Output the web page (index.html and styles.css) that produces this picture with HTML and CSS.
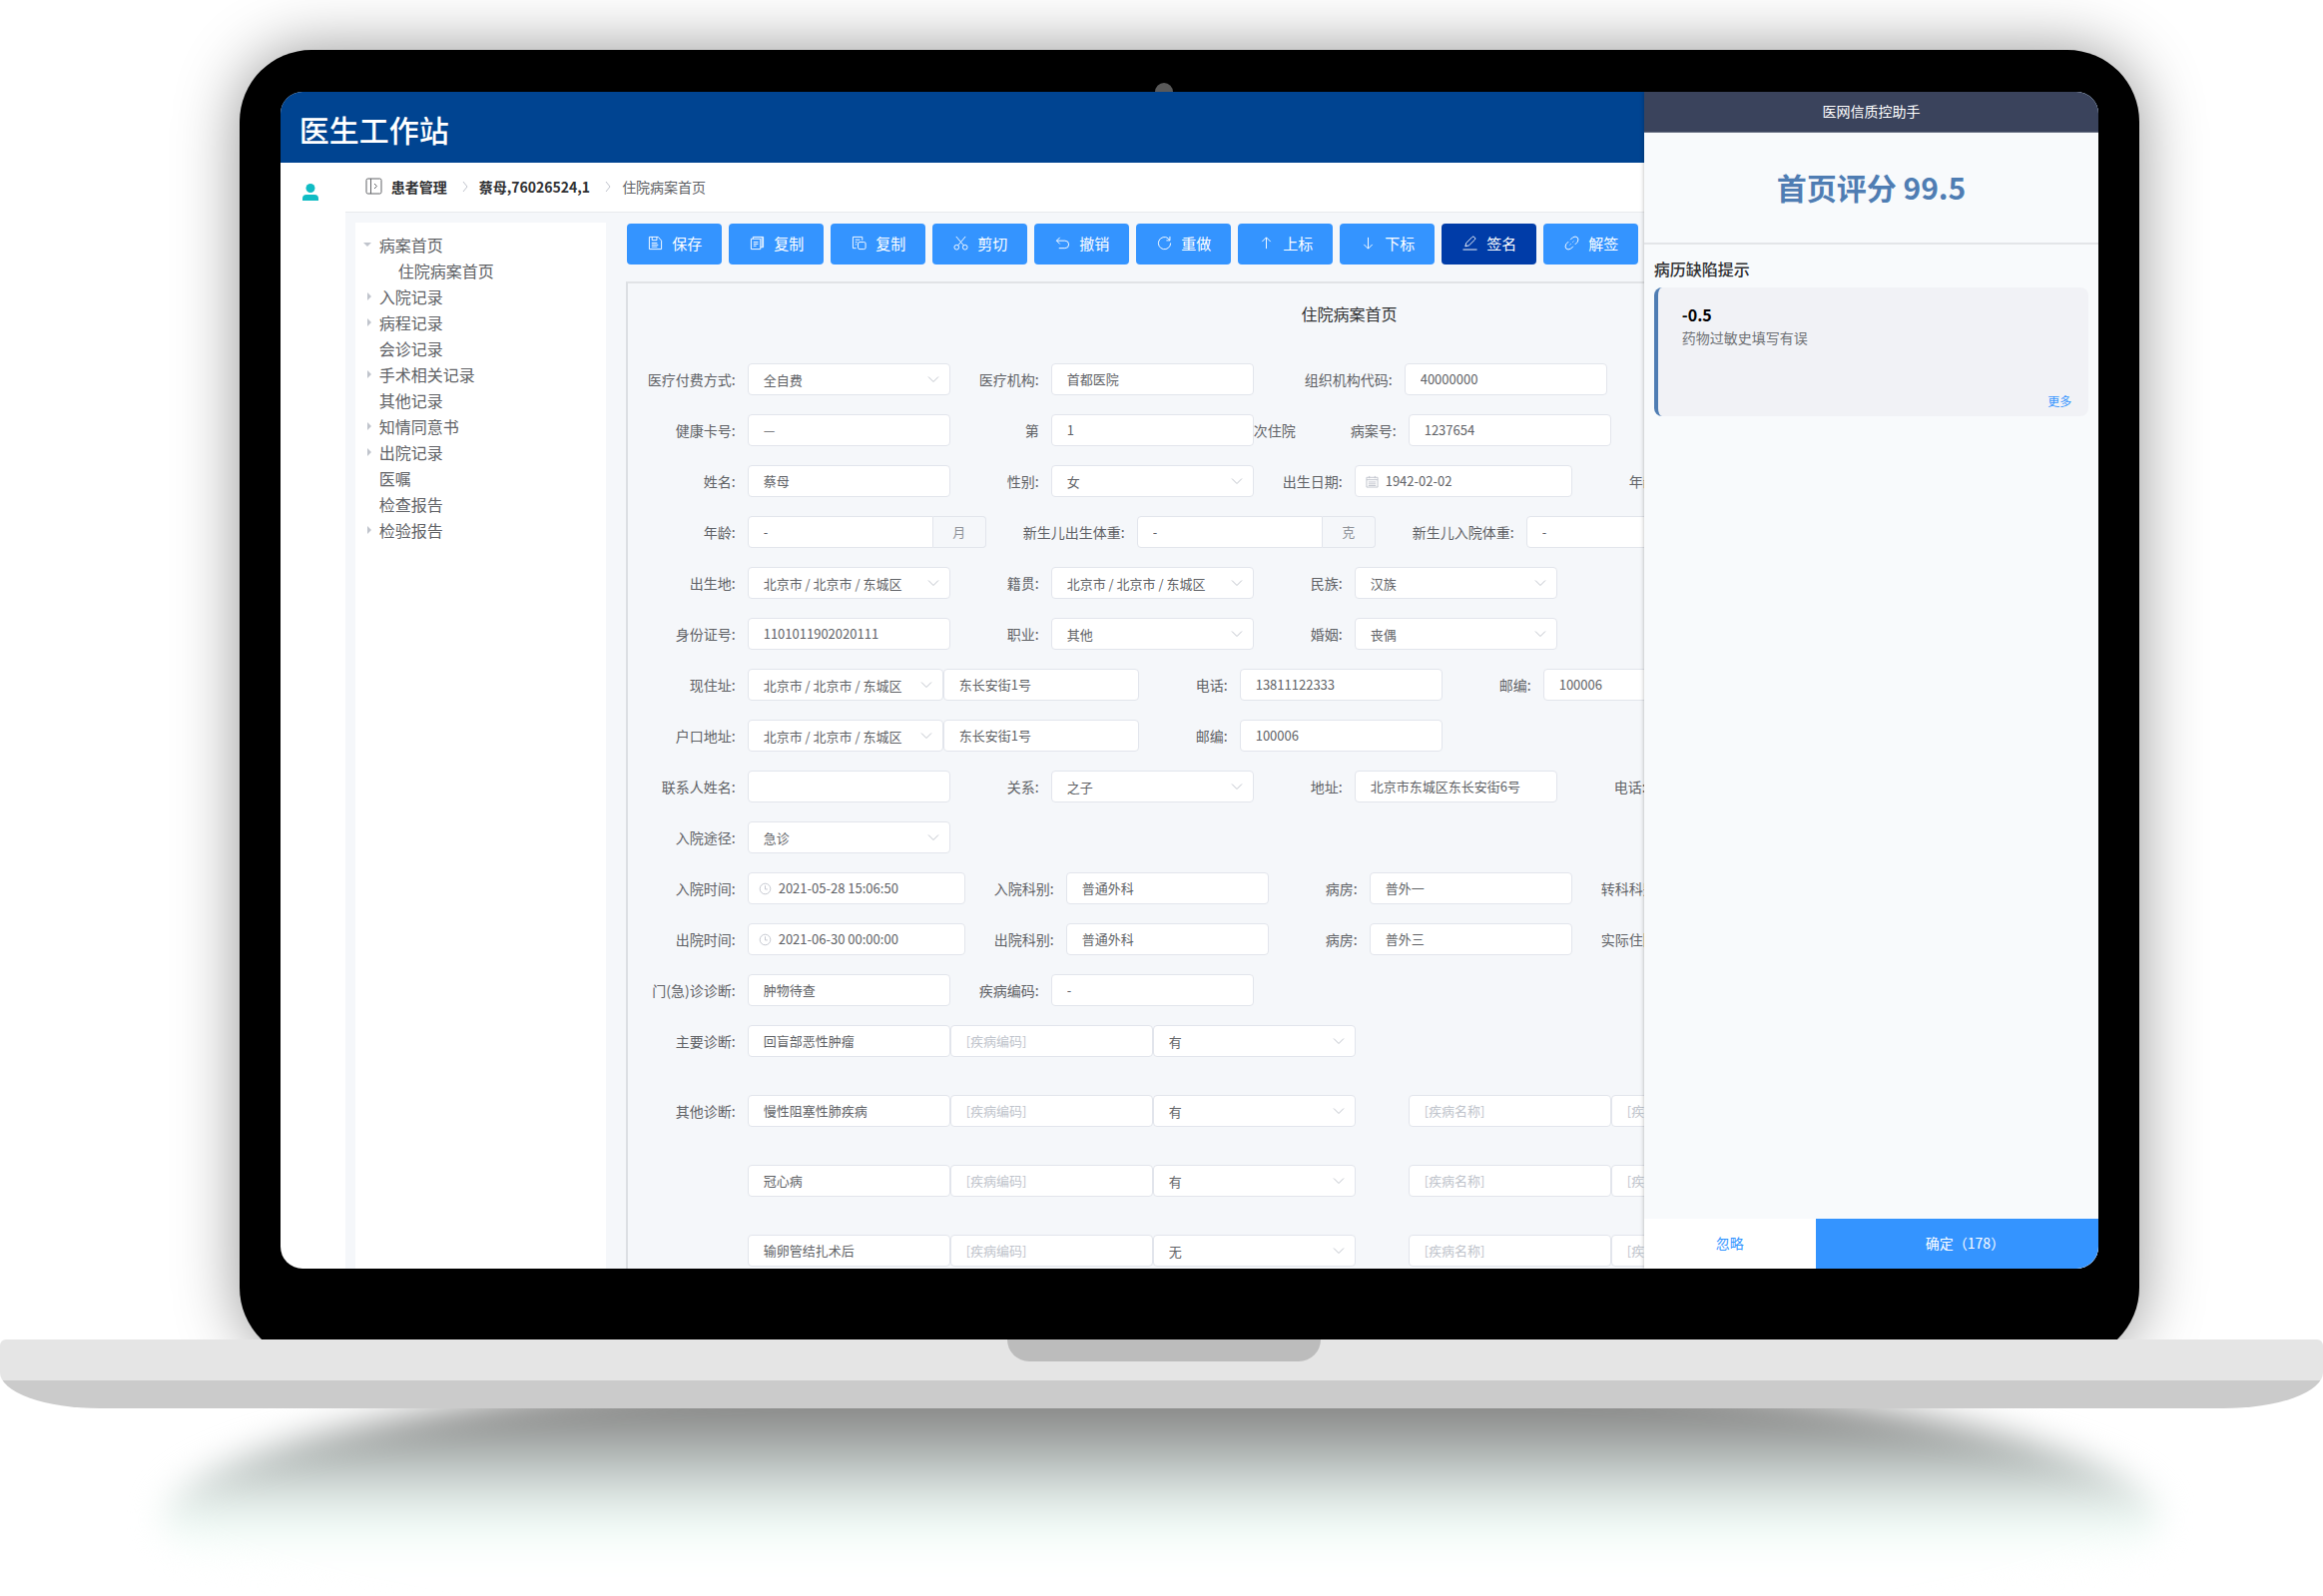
FILE: index.html
```html
<!DOCTYPE html>
<html lang="zh-CN">
<head>
<meta charset="utf-8">
<title>医生工作站</title>
<link rel="stylesheet" href="styles.css">
</head>
<body>
<svg class="sprite" aria-hidden="true">
  <symbol id="i-down" viewBox="0 0 12 12"><path d="M1 3.5 6 8.5 11 3.5"/></symbol>
  <symbol id="i-right" viewBox="0 0 6 12"><path d="M1 1 5 6 1 11"/></symbol>
  <symbol id="i-save" viewBox="0 0 16 16"><path d="M1.5 1.5h9.5l3.500 4v9h-13zM4.500 1.500v3.500h5v-3.500M4 8h6M4 10h7M4 12h6"/></symbol>
  <symbol id="i-copy" viewBox="0 0 16 16"><path d="M1.500 3.500h10v11h-10zM3.500 3.500v-2h11v11h-3M13 1.500v11M4 7h5M4 9h5M4 11h3"/></symbol>
  <symbol id="i-paste" viewBox="0 0 16 16"><path d="M5 13.500H1.500v-12h10V5M4 4.500h5M4 7h2M4 9.500h1.500"/><rect x="7" y="7" width="8" height="7.500" rx="1.500"/></symbol>
  <symbol id="i-cut" viewBox="0 0 16 16"><path d="M3 1l8 9.500M13 1 5 10.500"/><circle cx="3.500" cy="12.500" r="2.500"/><circle cx="12.500" cy="12.500" r="2.500"/></symbol>
  <symbol id="i-undo" viewBox="0 0 16 16"><path d="M5 2 1.500 5.500 5 9M1.500 5.500H10.500a4 4 0 0 1 0 8H4"/></symbol>
  <symbol id="i-redo" viewBox="0 0 16 16"><path d="M14.500 8A6.500 6.500 0 1 1 12 3L13.500 5M13.800 1v4.200H10"/></symbol>
  <symbol id="i-up" viewBox="0 0 16 16"><path d="M8 14V2M3.500 6.500 8 2l4.500 4.500"/></symbol>
  <symbol id="i-dn" viewBox="0 0 16 16"><path d="M8 2v12M3.500 9.500 8 14l4.500-4.500"/></symbol>
  <symbol id="i-edit" viewBox="0 0 16 16"><path d="M3 11.500 4 8 10.500 1.500q1-.8 2 0l.8.8q.8 1 0 2L7 10.500zM.500 15h15"/></symbol>
  <symbol id="i-link" viewBox="0 0 16 16"><path d="M6.500 4.500 9 2q3-1.800 5 0 1.800 2 0 5l-2.500 2.500M9.500 11.500 7 14q-3 1.800-5 0-1.800-2 0-5L4.500 6.500M6 10l1-1M9 7l1-1"/></symbol>
  <symbol id="i-cal" viewBox="0 0 14 14"><path d="M1 2.500h12v10.500H1zM1 5h12M4 1v2.500M10 1v2.500M3 7.500h8M3 9.500h8M3 11.300h8"/></symbol>
  <symbol id="i-clock" viewBox="0 0 14 14"><circle cx="7" cy="7" r="5.700"/><path d="M7 3.500V7.500h2.500"/></symbol>
</svg>

<div class="lid">
  <div class="bezel">
    <span class="camera"></span>
    <div class="screen">
      <header class="topbar"><h1>医生工作站</h1></header>
      <div class="body">
        <nav class="rail">
          <svg class="user" viewBox="0 0 16 17"><circle cx="8" cy="4.500" r="4.500"/><path d="M0 17v-2q0-4 4-4h8q4 0 4 4v2z"/></svg>
        </nav>
        <div class="main">
          <nav class="crumbs">
            <svg class="fold" viewBox="0 0 17 17"><rect x="1" y="1" width="15" height="15" rx="1.500"/><path d="M5.500 1v15M9 6l2.500 2.500L9 11"/></svg>
            <a href="#">患者管理</a>
            <svg class="sep"><use href="#i-right"/></svg>
            <a href="#">蔡母,76026524,1</a>
            <svg class="sep"><use href="#i-right"/></svg>
            <span>住院病案首页</span>
          </nav>
          <div class="work">
            <ul class="tree">
              <li class="open">病案首页</li>
              <li class="child">住院病案首页</li>
              <li class="shut">入院记录</li>
              <li class="shut">病程记录</li>
              <li>会诊记录</li>
              <li class="shut">手术相关记录</li>
              <li>其他记录</li>
              <li class="shut">知情同意书</li>
              <li class="shut">出院记录</li>
              <li>医嘱</li>
              <li>检查报告</li>
              <li class="shut">检验报告</li>
            </ul>
            <div class="content">
              <div class="tools">
                <button><svg><use href="#i-save"/></svg>保存</button>
                <button><svg><use href="#i-copy"/></svg>复制</button>
                <button><svg><use href="#i-paste"/></svg>复制</button>
                <button><svg><use href="#i-cut"/></svg>剪切</button>
                <button><svg><use href="#i-undo"/></svg>撤销</button>
                <button><svg><use href="#i-redo"/></svg>重做</button>
                <button><svg><use href="#i-up"/></svg>上标</button>
                <button><svg><use href="#i-dn"/></svg>下标</button>
                <button class="dark"><svg><use href="#i-edit"/></svg>签名</button>
                <button><svg><use href="#i-link"/></svg>解签</button>
              </div>
              <form class="sheet">
                <h2>住院病案首页</h2>
                <div class="row">
                  <label for="pay">医疗付费方式:</label><span class="sel"><select id="pay"><option>全自费</option></select><svg><use href="#i-down"/></svg></span>
                  <label for="org">医疗机构:</label><input id="org" value="首都医院">
                  <label for="code" class="wide">组织机构代码:</label><input id="code" value="40000000">
                </div>
                <div class="row">
                  <label for="card">健康卡号:</label><input id="card" value="—">
                  <label for="times">第</label><input id="times" value="1"><span class="unit">次住院</span>
                  <label for="mrn" class="mid">病案号:</label><input id="mrn" value="1237654">
                </div>
                <div class="row">
                  <label for="name">姓名:</label><input id="name" value="蔡母">
                  <label for="sex">性别:</label><span class="sel"><select id="sex"><option>女</option></select><svg><use href="#i-down"/></svg></span>
                  <label for="birth">出生日期:</label><span class="date"><svg><use href="#i-cal"/></svg><input id="birth" value="1942-02-02"></span>
                  <label>年龄:</label>
                </div>
                <div class="row">
                  <label for="age">年龄:</label><span class="group"><input id="age" value="-"><span>月</span></span>
                  <label for="bw" class="wide">新生儿出生体重:</label><span class="group"><input id="bw" value="-"><span>克</span></span>
                  <label for="aw" class="wide">新生儿入院体重:</label><span class="group"><input id="aw" value="-"><span>克</span></span>
                </div>
                <div class="row">
                  <label for="bp">出生地:</label><span class="sel"><select id="bp"><option>北京市 / 北京市 / 东城区</option></select><svg><use href="#i-down"/></svg></span>
                  <label for="np">籍贯:</label><span class="sel"><select id="np"><option>北京市 / 北京市 / 东城区</option></select><svg><use href="#i-down"/></svg></span>
                  <label for="eth">民族:</label><span class="sel"><select id="eth"><option>汉族</option></select><svg><use href="#i-down"/></svg></span>
                </div>
                <div class="row">
                  <label for="idn">身份证号:</label><input id="idn" value="1101011902020111">
                  <label for="job">职业:</label><span class="sel"><select id="job"><option>其他</option></select><svg><use href="#i-down"/></svg></span>
                  <label for="mar">婚姻:</label><span class="sel"><select id="mar"><option>丧偶</option></select><svg><use href="#i-down"/></svg></span>
                </div>
                <div class="row">
                  <label for="cur">现住址:</label><span class="sel short"><select id="cur"><option>北京市 / 北京市 / 东城区</option></select><svg><use href="#i-down"/></svg></span><input class="short" aria-label="现住址街道" value="东长安街1号">
                  <label for="tel">电话:</label><input id="tel" value="13811122333">
                  <label for="zip">邮编:</label><input id="zip" value="100006">
                </div>
                <div class="row">
                  <label for="reg">户口地址:</label><span class="sel short"><select id="reg"><option>北京市 / 北京市 / 东城区</option></select><svg><use href="#i-down"/></svg></span><input class="short" aria-label="户口街道" value="东长安街1号">
                  <label for="zip2">邮编:</label><input id="zip2" value="100006">
                </div>
                <div class="row">
                  <label for="con">联系人姓名:</label><input id="con">
                  <label for="rel">关系:</label><span class="sel"><select id="rel"><option>之子</option></select><svg><use href="#i-down"/></svg></span>
                  <label for="addr">地址:</label><input id="addr" value="北京市东城区东长安街6号">
                  <label>电话:</label>
                </div>
                <div class="row">
                  <label for="way">入院途径:</label><span class="sel"><select id="way"><option>急诊</option></select><svg><use href="#i-down"/></svg></span>
                </div>
                <div class="row">
                  <label for="in">入院时间:</label><span class="date"><svg><use href="#i-clock"/></svg><input id="in" value="2021-05-28 15:06:50"></span>
                  <label for="ind">入院科别:</label><input id="ind" value="普通外科">
                  <label for="inw">病房:</label><input id="inw" value="普外一">
                  <label>转科科别:</label>
                </div>
                <div class="row">
                  <label for="out">出院时间:</label><span class="date"><svg><use href="#i-clock"/></svg><input id="out" value="2021-06-30 00:00:00"></span>
                  <label for="outd">出院科别:</label><input id="outd" value="普通外科">
                  <label for="outw">病房:</label><input id="outw" value="普外三">
                  <label>实际住院:</label>
                </div>
                <div class="row">
                  <label for="er">门(急)诊诊断:</label><input id="er" value="肿物待查">
                  <label for="erc">疾病编码:</label><input id="erc" value="-">
                </div>
                <div class="row loose">
                  <label for="dx">主要诊断:</label><input id="dx" value="回盲部恶性肿瘤"><input aria-label="疾病编码" placeholder="[疾病编码]"><span class="sel"><select aria-label="入院病情"><option>有</option></select><svg><use href="#i-down"/></svg></span>
                </div>
                <div class="row loose">
                  <label for="dx1">其他诊断:</label><input id="dx1" value="慢性阻塞性肺疾病"><input aria-label="疾病编码" placeholder="[疾病编码]"><span class="sel"><select aria-label="入院病情"><option>有</option></select><svg><use href="#i-down"/></svg></span>
                  <input class="next" aria-label="疾病名称" placeholder="[疾病名称]"><input aria-label="疾病编码" placeholder="[疾病编码]">
                </div>
                <div class="row loose">
                  <label for="dx2"></label><input id="dx2" value="冠心病"><input aria-label="疾病编码" placeholder="[疾病编码]"><span class="sel"><select aria-label="入院病情"><option>有</option></select><svg><use href="#i-down"/></svg></span>
                  <input class="next" aria-label="疾病名称" placeholder="[疾病名称]"><input aria-label="疾病编码" placeholder="[疾病编码]">
                </div>
                <div class="row">
                  <label for="dx3"></label><input id="dx3" value="输卵管结扎术后"><input aria-label="疾病编码" placeholder="[疾病编码]"><span class="sel"><select aria-label="入院病情"><option>无</option></select><svg><use href="#i-down"/></svg></span>
                  <input class="next" aria-label="疾病名称" placeholder="[疾病名称]"><input aria-label="疾病编码" placeholder="[疾病编码]">
                </div>
              </form>
            </div>
          </div>
        </div>
      </div>

      <aside class="drawer">
        <h2 class="drawer-title">医网信质控助手</h2>
        <p class="score">首页评分 99.5</p>
        <section class="hints">
          <h3>病历缺陷提示</h3>
          <article class="card">
            <strong>-0.5</strong>
            <p>药物过敏史填写有误</p>
            <a href="#">更多</a>
          </article>
        </section>
        <footer class="actions">
          <button class="ignore">忽略</button>
          <button class="confirm">确定（178）</button>
        </footer>
      </aside>
    </div>
  </div>
</div>
<div class="base"><span class="notch"></span></div>
<div class="floor"><div class="shade"></div></div>
</body>
</html>
```
FILE: styles.css
```css
* { box-sizing: border-box; }
body, h1, h2, h3, p, ul { margin: 0; padding: 0; }
body {
  background: #fff;
  color: #606266;
  font: 14px/20px "Noto Sans CJK SC", sans-serif;
}
button, input, select { font: inherit; }
a { color: inherit; text-decoration: none; }
svg { fill: none; stroke: currentColor; flex: none; }
.sprite { position: absolute; width: 0; height: 0; }

/* laptop */
.lid { padding: 50px 7.9% 0 10.3%; overflow: hidden; }
.bezel {
  position: relative;
  margin-bottom: -20px;
  padding: 42px 41px 91px;
  border-radius: 72px;
  background: #000;
  box-shadow: 0 0 64px rgba(0, 0, 0, .42);
}
.camera {
  position: absolute;
  top: 33px;
  left: 917px;
  width: 18px;
  height: 18px;
  border-radius: 50%;
  background: #595959;
}
.screen {
  position: relative;
  overflow: hidden;
  border-radius: 22px;
  background: #fff;
}
.base {
  position: relative;
  height: 69px;
  padding-left: 4px;
  border-radius: 6px 6px 100px 100px / 6px 6px 36px 36px;
  background: linear-gradient(#e5e5e5 41px, #cbcbcb 41px);
  display: flex;
  justify-content: center;
}
.notch {
  width: 314px;
  height: 22px;
  border-radius: 0 0 22px 22px;
  background: #bcbcbc;
}
.floor { height: 188px; overflow: hidden; padding: 0 7%; }
.shade {
  height: 320px;
  margin-top: -48px;
  border-radius: 50%;
  background: linear-gradient(#868685 40px, #9a9c9b 68px, #b1b7b5 92px, #c8d0ce 116px, #dfe7e4 138px, #ecf7f3 160px, #f8fefb 180px, #fff 204px);
  filter: blur(16px);
}

/* application frame */
.topbar {
  display: flex;
  align-items: center;
  height: 71px;
  padding: 2px 19px 0;
  background: #004491;
}
.topbar h1 { color: #fff; font-size: 30px; line-height: 40px; font-weight: 500; }
.body { display: flex; }
.rail { width: 65px; padding: 21px 0 0 22px; flex: none; }
.user { width: 16px; height: 17px; fill: #10bcc4; stroke: none; display: block; }
.main { flex: 1; min-width: 0; overflow: hidden; background: #f5f7fa; }
.crumbs {
  display: flex;
  align-items: center;
  height: 50px;
  padding: 0 0 2px 20px;
  border-bottom: 1px solid #e8eaed;
  background: #fff;
}
.crumbs a { color: #303133; font-weight: 700; }
.fold { width: 17px; height: 17px; margin-right: 9px; color: #606266; }
.sep { width: 6px; height: 12px; margin: 0 11px 0 15px; color: #c0c4cc; }
.work { display: flex; padding: 10px 28px 0 10px; }
.tree {
  width: 251px;
  flex: none;
  padding: 9px 0 0 24px;
  background: #fff;
  list-style: none;
  font-size: 16px;
  line-height: 26px;
}
.tree li { display: flex; align-items: center; }
.tree .child { padding-left: 19px; }
.open::before, .shut::before {
  content: "";
  width: 0;
  height: 0;
  border: 4px solid transparent;
}
.open::before { margin: 4px 8px 0 -16px; border-top-color: #c0c4cc; }
.shut::before { margin: 0 4px 0 -12px; border-left-color: #c0c4cc; }

.content { flex: 1; min-width: 0; padding: 1px 0 0 20px; }
.tools { display: flex; gap: 7px; padding-left: 1px; }
.tools button {
  display: flex;
  align-items: center;
  justify-content: center;
  gap: 9px;
  width: 95px;
  height: 41px;
  padding: 0 0 2px 2px;
  border: 0;
  border-radius: 4px;
  background: #3494ff;
  color: #fff;
  font-size: 15px;
}
.tools svg { width: 15px; height: 15px; }
.tools .dark { background: #003ca8; }

/* record sheet */
.sheet {
  margin-top: 17px;
  padding: 18px 0 2px;
  border-top: 2px solid #e1e3e6;
  border-left: 2px solid #dcdfe3;
}
.sheet h2 {
  margin-bottom: 38px;
  color: #303133;
  font-size: 16px;
  line-height: 24px;
  font-weight: 400;
  text-align: center;
}
.row { display: flex; margin-bottom: 19px; line-height: 32px; white-space: nowrap; }
.row:last-child { margin-bottom: 0; }
.row.loose { margin-bottom: 38px; }
.row label { width: 101px; padding-right: 12px; flex: none; text-align: right; }
.row label:first-child { width: 120px; }
.row label.wide { width: 151px; }
.row label.mid { width: 113px; }
.row .unit { width: 42px; flex: none; }
.row input, .row select {
  width: 203px;
  height: 32px;
  flex: none;
  padding: 0 15px;
  border: 1px solid #e2e5ec;
  border-radius: 4px;
  background: #fff;
  color: #606266;
  font-size: 13px;
  appearance: none;
}
.row input::placeholder { color: #c0c4cc; opacity: 1; }
.sel, .date { position: relative; width: 203px; flex: none; display: flex; }
.sel svg { position: absolute; right: 11px; top: 10px; width: 12px; height: 12px; color: #c0c4cc; pointer-events: none; }
.row .date { width: 218px; }
.row .date input { width: 218px; padding-left: 30px; }
.date svg { position: absolute; left: 11px; top: 10px; width: 13px; height: 13px; color: #c0c4cc; }
.row .short, .row .short select { width: 196px; }
.row .next { margin-left: 53px; }
.group { display: flex; width: 239px; flex: none; }
.row .group input { width: 186px; border-radius: 4px 0 0 4px; }
.group span {
  width: 53px;
  height: 32px;
  border: 1px solid #e2e5ec;
  border-left: 0;
  border-radius: 0 4px 4px 0;
  color: #909399;
  font-size: 13px;
  line-height: 30px;
  text-align: center;
}

/* quality assistant */
.drawer {
  position: absolute;
  inset: 0 0 0 auto;
  width: 25%;
  display: flex;
  flex-direction: column;
  background: #f8fafc;
  box-shadow: 0 0 4px rgba(0, 0, 0, .3);
}
.drawer-title {
  height: 41px;
  border-bottom: 1px solid #6f7688;
  background: #3a435c;
  color: #fff;
  font-size: 14px;
  line-height: 39px;
  font-weight: 400;
  text-align: center;
}
.score {
  height: 112px;
  border-bottom: 2px solid #e3e5e8;
  color: #4f7db3;
  font-size: 30px;
  line-height: 108px;
  font-weight: 700;
  text-align: center;
}
.hints { flex: 1; padding: 12px 10px; }
.hints h3 { color: #303133; font-size: 16px; line-height: 24px; font-weight: 500; }
.card {
  display: flex;
  flex-direction: column;
  height: 129px;
  margin-top: 7px;
  padding: 15px 17px 5px 24px;
  border-left: 4px solid #4f7db3;
  border-radius: 8px;
  background: #f1f2f6;
}
.card strong { color: #000; font-size: 16px; line-height: 24px; }
.card p { color: #707276; line-height: 22px; }
.card a { margin-top: auto; align-self: flex-end; color: #3494ff; font-size: 12px; }
.actions { display: flex; height: 50px; }
.actions button { border: 0; font-size: 14px; padding: 0 0 2px; }
.ignore { width: 172px; background: #fff; color: #3494ff; }
.actions .confirm { flex: 1; padding-left: 16px; background: #3494ff; color: #fff; }
```
